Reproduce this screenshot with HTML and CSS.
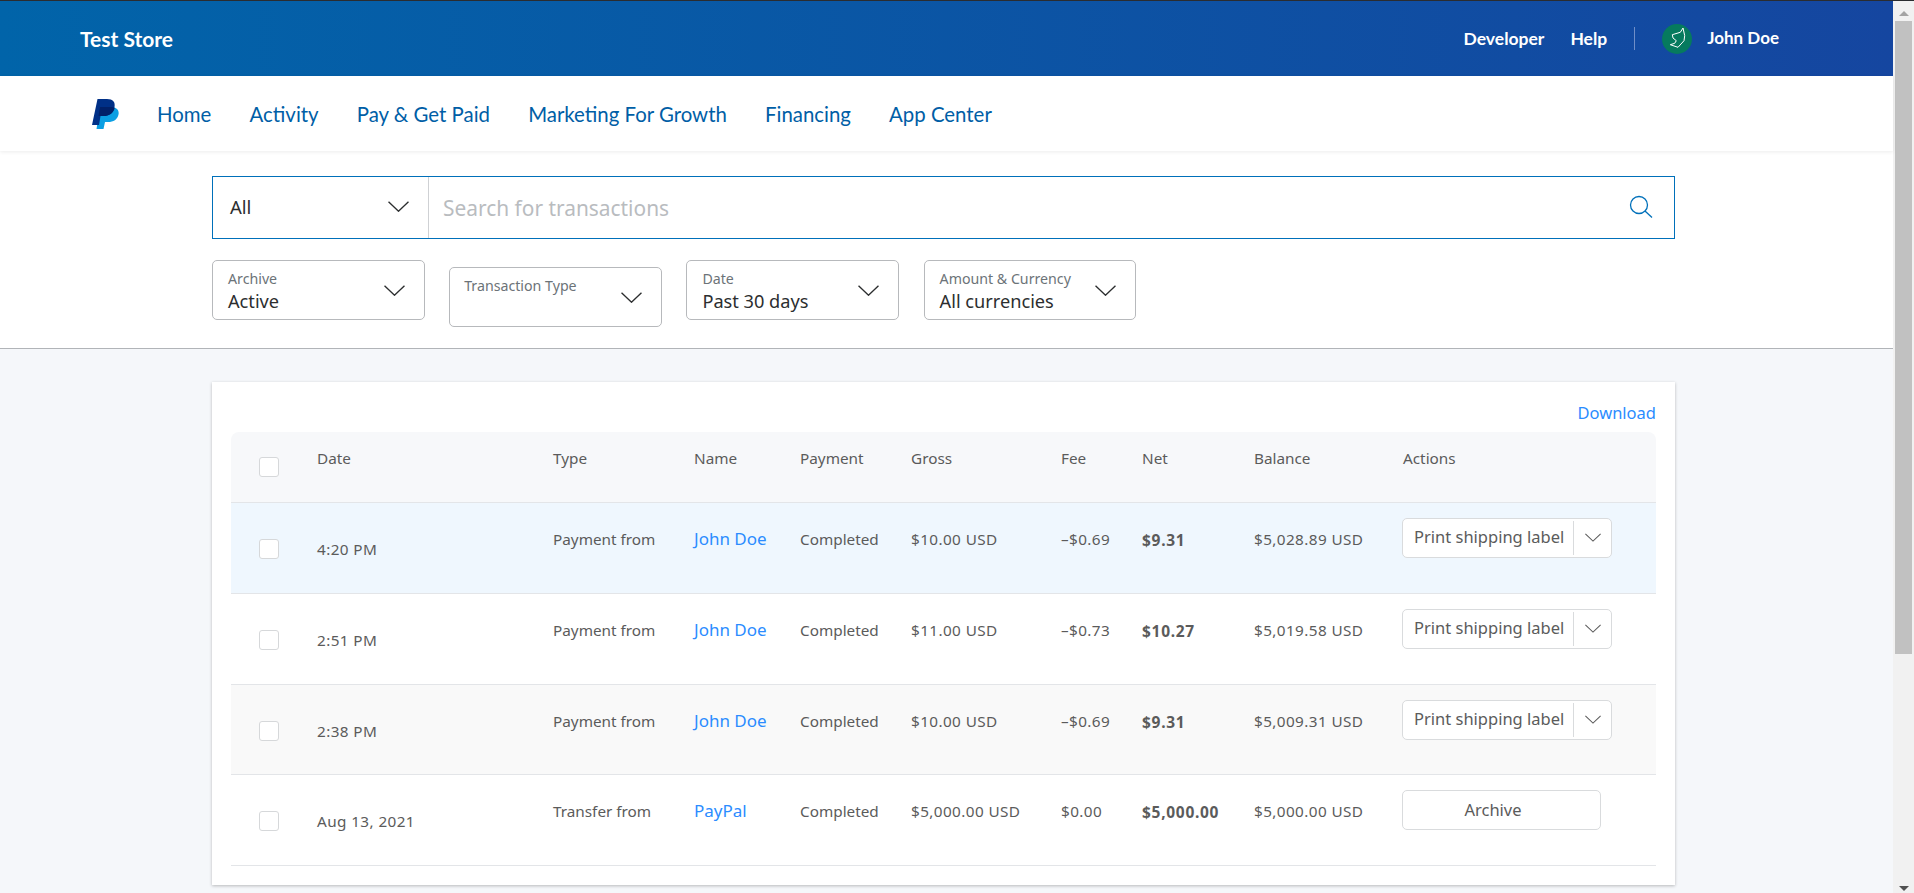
FILE: index.html
```html
<!DOCTYPE html>
<html>

<head>
    <title>Activity - Test Store</title>
    <link rel="stylesheet" href="styles.css">
</head>

<body>

    <svg class="icon-defs" width="0" height="0">
        <symbol id="chevron" viewBox="0 0 20 10">
            <polyline points="0.5,0.5 10,9.5 19.5,0.5" fill="none" stroke="currentColor" stroke-width="1.3" />
        </symbol>
    </svg>

    <div id="page">

        <div id="header">
            <div class="store-name">Test Store</div>
            <div class="header-links">
                <a href="#">Developer</a>
                <a href="#">Help</a>
                <span class="header-sep"></span>
                <span class="avatar">
                    <svg width="30" height="30" viewBox="0 0 30 30">
                        <path d="M21 4 L18.300 8.300 L10.300 10.700 L11 14 L14.300 16.700 L12.700 19.300 L8.300 20.700 L16 23.300 L22 16.700 L22.700 11.700 Z" fill="none" stroke="#fff" stroke-width="1" />
                    </svg>
                </span>
                <a href="#" class="user-name">John Doe</a>
            </div>
        </div>

        <div id="nav">
            <svg class="logo" width="27" height="30" viewBox="0 0 27 30">
                <path d="M8 8 H18 C24 8 27.500 10.500 26.500 15.500 C25.500 20.500 21.500 23 16 23 H13 L11.500 30 H4.500 Z" fill="#0b9fe3" />
                <path d="M5.500 0 H15 C21 0 23.500 3 22.500 8 C21.500 13.500 17.500 17 11.500 17 H8.500 L7 26 H0 Z" fill="#003087" />
                <path d="M8 8 H18 C20 8 21.500 8.300 22.700 8.900 C21.500 13.800 17.500 17 11.500 17 H8.500 L6.500 17 Z" fill="#012169" />
            </svg>
            <a href="#">Home</a>
            <a href="#">Activity</a>
            <a href="#">Pay &amp; Get Paid</a>
            <a href="#">Marketing For Growth</a>
            <a href="#">Financing</a>
            <a href="#">App Center</a>
        </div>

        <div id="filters">
            <div class="search-bar">
                <div class="search-scope">
                    <span>All</span>
                    <svg class="chevron"><use href="#chevron" /></svg>
                </div>
                <input type="text" class="search-input" placeholder="Search for transactions">
                <svg class="search-icon" width="24" height="24" viewBox="0 0 24 24">
                    <circle cx="10" cy="10" r="8.500" fill="none" stroke="#0070ba" stroke-width="1.300" />
                    <line x1="16" y1="16" x2="23" y2="22.500" stroke="#0070ba" stroke-width="1.300" />
                </svg>
            </div>

            <div class="filter-row">
                <div class="filter">
                    <div class="filter-text">
                        <div class="filter-label">Archive</div>
                        <div class="filter-value">Active</div>
                    </div>
                    <svg class="chevron"><use href="#chevron" /></svg>
                </div>
                <div class="filter filter-empty">
                    <div>
                        <div class="filter-label">Transaction Type</div>
                    </div>
                    <svg class="chevron"><use href="#chevron" /></svg>
                </div>
                <div class="filter">
                    <div class="filter-text">
                        <div class="filter-label">Date</div>
                        <div class="filter-value">Past 30 days</div>
                    </div>
                    <svg class="chevron"><use href="#chevron" /></svg>
                </div>
                <div class="filter">
                    <div class="filter-text">
                        <div class="filter-label">Amount &amp; Currency</div>
                        <div class="filter-value">All currencies</div>
                    </div>
                    <svg class="chevron"><use href="#chevron" /></svg>
                </div>
            </div>
        </div>

        <div id="content">
            <div class="card">
                <div class="download-row"><a href="#">Download</a></div>
                <table class="tx-table">
                    <colgroup>
                        <col class="col-check">
                        <col class="col-date">
                        <col class="col-type">
                        <col class="col-name">
                        <col class="col-payment">
                        <col class="col-gross">
                        <col class="col-fee">
                        <col class="col-net">
                        <col class="col-balance">
                        <col class="col-actions">
                    </colgroup>
                    <thead>
                        <tr>
                            <th class="check-cell"><input type="checkbox"></th>
                            <th>Date</th>
                            <th>Type</th>
                            <th>Name</th>
                            <th>Payment</th>
                            <th>Gross</th>
                            <th>Fee</th>
                            <th>Net</th>
                            <th>Balance</th>
                            <th>Actions</th>
                        </tr>
                    </thead>
                    <tbody>
                        <tr class="row-new">
                            <td class="check-cell"><input type="checkbox"></td>
                            <td class="date-cell">4:20 PM</td>
                            <td>Payment from</td>
                            <td><a href="#" class="name-link">John Doe</a></td>
                            <td>Completed</td>
                            <td class="amount">$10.00 USD</td>
                            <td class="amount">–$0.69</td>
                            <td class="net-cell">$9.31</td>
                            <td class="amount">$5,028.89 USD</td>
                            <td class="action-cell">
                                <div class="split-button">
                                    <span class="split-label">Print shipping label</span>
                                    <span class="split-arrow"><svg class="chevron-small"><use href="#chevron" /></svg></span>
                                </div>
                            </td>
                        </tr>
                        <tr>
                            <td class="check-cell"><input type="checkbox"></td>
                            <td class="date-cell">2:51 PM</td>
                            <td>Payment from</td>
                            <td><a href="#" class="name-link">John Doe</a></td>
                            <td>Completed</td>
                            <td class="amount">$11.00 USD</td>
                            <td class="amount">–$0.73</td>
                            <td class="net-cell">$10.27</td>
                            <td class="amount">$5,019.58 USD</td>
                            <td class="action-cell">
                                <div class="split-button">
                                    <span class="split-label">Print shipping label</span>
                                    <span class="split-arrow"><svg class="chevron-small"><use href="#chevron" /></svg></span>
                                </div>
                            </td>
                        </tr>
                        <tr class="row-grey">
                            <td class="check-cell"><input type="checkbox"></td>
                            <td class="date-cell">2:38 PM</td>
                            <td>Payment from</td>
                            <td><a href="#" class="name-link">John Doe</a></td>
                            <td>Completed</td>
                            <td class="amount">$10.00 USD</td>
                            <td class="amount">–$0.69</td>
                            <td class="net-cell">$9.31</td>
                            <td class="amount">$5,009.31 USD</td>
                            <td class="action-cell">
                                <div class="split-button">
                                    <span class="split-label">Print shipping label</span>
                                    <span class="split-arrow"><svg class="chevron-small"><use href="#chevron" /></svg></span>
                                </div>
                            </td>
                        </tr>
                        <tr>
                            <td class="check-cell"><input type="checkbox"></td>
                            <td class="date-cell">Aug 13, 2021</td>
                            <td>Transfer from</td>
                            <td><a href="#" class="name-link">PayPal</a></td>
                            <td>Completed</td>
                            <td class="amount">$5,000.00 USD</td>
                            <td class="amount">$0.00</td>
                            <td class="net-cell">$5,000.00</td>
                            <td class="amount">$5,000.00 USD</td>
                            <td class="action-cell">
                                <div class="archive-button">Archive</div>
                            </td>
                        </tr>
                    </tbody>
                </table>
            </div>
        </div>

    </div>

    <div id="scrollbar">
        <span class="scroll-up"></span>
        <span class="scroll-thumb"></span>
        <span class="scroll-down"></span>
    </div>

</body>

</html>
```

FILE: styles.css
```css
* {
    box-sizing: border-box;
}

html,
body {
    height: 893px;
    margin: 0;
    overflow: hidden;
}

body {
    display: flex;
    border-top: 1px solid #2a2c30;
    font-family: "Noto Sans", sans-serif;
    color: #5b5b5b;
    background: #f5f7fa;
}

a {
    text-decoration: none;
}

.icon-defs {
    position: absolute;
}

#page {
    flex: 1;
    min-width: 0;
}

/* top bar */
#header {
    display: flex;
    justify-content: space-between;
    align-items: center;
    height: 75px;
    padding: 0 114px 0 80px;
    background: linear-gradient(to right, #0164a9, #1546a0);
    color: white;
}

.store-name {
    font-family: Lato, sans-serif;
    font-size: 21px;
    font-weight: bold;
}

.header-links {
    display: flex;
    align-items: center;
    font-family: Lato, sans-serif;
    font-size: 17.500px;
    font-weight: bold;
}

.header-links a {
    color: white;
    margin-right: 26px;
}

.header-links .user-name {
    margin: -3px 0 0 15px;
    font-size: 17px;
}

.header-sep {
    width: 1px;
    height: 23px;
    margin: 0 27px 0 1px;
    background: #6f8ec8;
}

.avatar {
    display: block;
    width: 30px;
    height: 30px;
    border-radius: 50%;
    background: #067a5e;
}

.avatar svg {
    display: block;
}

/* main nav */
#nav {
    display: flex;
    align-items: center;
    height: 75px;
    padding-left: 92px;
    background: white;
    box-shadow: 0 1px 4px rgba(0, 0, 0, 0.08);
    position: relative;
    font-family: Lato, sans-serif;
    font-size: 20.400px;
}

#nav a {
    color: #005ea6;
    margin-right: 38.200px;
}

.logo {
    margin-right: 38px;
}

/* search + filter dropdowns */
#filters {
    height: 198px;
    padding: 25px 218px 0 212px;
    background: white;
    border-bottom: 1px solid #b1b4b8;
}

.search-bar {
    display: flex;
    align-items: center;
    height: 63px;
    border: 1px solid #0070ba;
}

.search-scope {
    display: flex;
    justify-content: space-between;
    align-items: center;
    flex: none;
    width: 216px;
    height: 100%;
    padding: 0 19px 2px 17px;
    border-right: 1px solid #cfd1d4;
    font-size: 18.500px;
    color: #2c2e2f;
}

.search-input {
    flex: 1;
    min-width: 0;
    height: 100%;
    padding: 0 14px;
    border: none;
    outline: none;
    background: transparent;
    font-family: "Noto Sans", sans-serif;
    font-size: 20.900px;
    color: #2c2e2f;
}

.search-input::placeholder {
    color: #b9bcbf;
    opacity: 1;
}

.search-icon {
    flex: none;
    margin: 0 21px 2px 0;
}

.chevron {
    flex: none;
    width: 21px;
    height: 11px;
    color: #2c2e2f;
}

.filter-row {
    display: flex;
    align-items: flex-start;
    gap: 24.600px;
    margin-top: 21px;
}

.filter {
    display: flex;
    justify-content: space-between;
    align-items: center;
    width: 212.600px;
    height: 60px;
    padding: 0 19px 0 15px;
    border: 1px solid #b7b9bc;
    border-radius: 5px;
}

.filter-text {
    padding-top: 2px;
}

.filter-empty {
    margin-top: 7px;
    padding-left: 14px;
}

.filter-empty > div {
    align-self: flex-start;
    padding-top: 8px;
}

.filter-label {
    font-size: 14.200px;
    line-height: 19px;
    color: #6c7378;
}

.filter-value {
    margin-top: 1px;
    font-size: 18.200px;
    line-height: 24px;
    color: #2c2e2f;
}

/* transactions card */
#content {
    padding: 33px 218px 0 212px;
}

.card {
    height: 503px;
    padding: 0 19px;
    background: white;
    box-shadow: 0 1px 3px rgba(0, 0, 0, 0.25);
}

.download-row {
    height: 50px;
    padding-top: 19px;
    text-align: right;
    font-size: 16.500px;
}

.download-row a,
.name-link {
    color: #2b8cff;
}

.tx-table {
    width: 100%;
    border-collapse: collapse;
    table-layout: fixed;
    font-size: 15.300px;
}

.col-check { width: 86px; }
.col-date { width: 236px; }
.col-type { width: 141px; }
.col-name { width: 106px; }
.col-payment { width: 111px; }
.col-gross { width: 150px; }
.col-fee { width: 81px; }
.col-net { width: 112px; }
.col-balance { width: 149px; }

.tx-table th {
    height: 70px;
    padding: 16px 0 0;
    vertical-align: top;
    text-align: left;
    font-weight: normal;
    background: #f7f8fa;
    border-bottom: 1px solid #e3e5e8;
}

.tx-table th:first-child {
    border-top-left-radius: 8px;
}

.tx-table th:last-child {
    border-top-right-radius: 8px;
}

.tx-table td {
    height: 91px;
    padding: 26px 0 0;
    vertical-align: top;
    border-bottom: 1px solid #e3e5e8;
}

.row-new td {
    background: #eff7fe;
}

.tx-table .row-grey td {
    height: 90px;
    background: #f9f9f9;
}

.tx-table .check-cell {
    padding: 25px 0 0 28px;
}

.tx-table td.check-cell {
    padding-top: 36px;
}

.tx-table input {
    display: block;
    appearance: none;
    width: 20px;
    height: 20px;
    margin: 0;
    background: white;
    border: 1px solid #d6d8da;
    border-radius: 3px;
}

.tx-table .date-cell {
    padding-top: 36px;
    letter-spacing: 0.400px;
}

.amount {
    letter-spacing: 0.400px;
}

.name-link {
    display: block;
    margin-top: -2px;
    font-size: 17px;
}

.net-cell {
    font-weight: bold;
    font-size: 15.500px;
    letter-spacing: 0.700px;
}

.tx-table .action-cell {
    padding-top: 15px;
}

.split-button {
    display: flex;
    align-items: center;
    width: 210px;
    height: 40px;
    margin-left: -1px;
    background: white;
    border: 1px solid #d9dbdd;
    border-radius: 5px;
    font-size: 16.500px;
}

.split-label {
    flex: 1;
    padding: 0 0 2px 11px;
}

.split-arrow {
    display: flex;
    justify-content: center;
    align-items: center;
    flex: none;
    width: 38px;
    height: 34px;
    border-left: 1px solid #d9dbdd;
}

.chevron-small {
    width: 16px;
    height: 9px;
    color: #5b5b5b;
}

.archive-button {
    width: 199px;
    height: 40px;
    margin-left: -1px;
    padding-right: 17px;
    background: white;
    border: 1px solid #d9dbdd;
    border-radius: 5px;
    line-height: 38px;
    text-align: center;
    font-size: 16.500px;
}

/* page scrollbar, drawn by hand */
#scrollbar {
    display: flex;
    flex-direction: column;
    align-items: center;
    flex: none;
    width: 21px;
    padding: 0 2px;
    background: #f1f1f1;
}

.scroll-up,
.scroll-down {
    flex: none;
    width: 0;
    height: 0;
    border-left: 5px solid transparent;
    border-right: 5px solid transparent;
}

.scroll-up {
    margin: 10px 0 5px;
    border-bottom: 5px solid #a3a3a3;
}

.scroll-thumb {
    flex: none;
    width: 100%;
    height: 633px;
    background: #c1c1c1;
}

.scroll-down {
    margin-top: auto;
    margin-bottom: 2px;
    border-top: 5px solid #505050;
}
```
